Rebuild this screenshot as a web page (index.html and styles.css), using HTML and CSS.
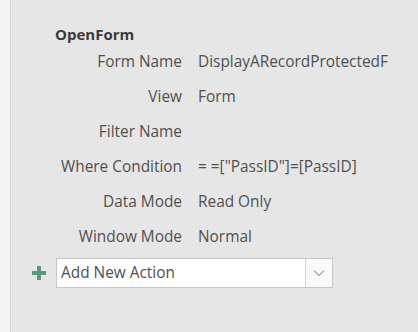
FILE: index.html
```html
<!DOCTYPE html>
<html lang="en">
<head>
    <meta charset="UTF-8">
    <title>Macro</title>
    <link rel="stylesheet" href="styles.css">
</head>
<body>
<div class="pane">
    <div class="gutter"></div>
    <div class="content">
        <div class="action-name">OpenForm</div>
        <div class="args">
            <div class="label">Form Name</div><div class="value">DisplayARecordProtectedF</div>
            <div class="label">View</div><div class="value">Form</div>
            <div class="label">Filter Name</div><div class="value"></div>
            <div class="label">Where Condition</div><div class="value">= =["PassID"]=[PassID]</div>
            <div class="label">Data Mode</div><div class="value">Read Only</div>
            <div class="label">Window Mode</div><div class="value">Normal</div>
        </div>
        <div class="add-row">
            <span class="plus">
                <svg width="14" height="14" viewBox="0 0 14 14"><path d="M5 0h4v5h5v4H9v5H5V9H0V5h5z" fill="#5b9a7c"/></svg>
            </span>
            <div class="combo">
                <span class="combo-text">Add New Action</span>
                <span class="combo-btn">
                    <svg width="12" height="8" viewBox="0 0 12 8"><path d="M1 1.5l5 5 5-5" fill="none" stroke="#666" stroke-width="1"/></svg>
                </span>
            </div>
        </div>
    </div>
</div>
</body>
</html>
```

FILE: styles.css
```css
* {
    margin: 0;
    padding: 0;
    box-sizing: border-box;
}

body {
    font-family: "Open Sans", "Noto Sans", sans-serif;
    background: #e6e6e6;
    width: 418px;
    height: 332px;
    overflow: hidden;
}

.pane {
    display: flex;
    height: 332px;
}

/* светлая полоса слева */
.gutter {
    width: 11px;
    background: #f4f4f4;
    border-right: 1px solid #d6d6d6;
}

.content {
    flex: 1;
    padding-top: 24px;
}

.action-name {
    font-weight: bold;
    font-size: 15px;
    color: #3a3a3a;
    margin-left: 44px;
    height: 20px;
    line-height: 20px;
}

.args {
    display: grid;
    grid-template-columns: 171px auto;
    column-gap: 16px;
    grid-auto-rows: 35px;
    font-size: 15.4px;
    color: #505050;
    line-height: 35px;
}

.label {
    text-align: right;
}

.value {
    white-space: nowrap;
}

.add-row {
    display: flex;
    align-items: center;
    margin-top: 4px;
    margin-left: 21px;
}

.plus {
    width: 14px;
    height: 14px;
    display: flex;
    margin-right: 10px;
}

.combo {
    display: flex;
    width: 277px;
    height: 30px;
    background: #fff;
    border: 1px solid #c6c6c6;
}

.combo-text {
    flex: 1;
    font-size: 15.4px;
    color: #505050;
    line-height: 28px;
    padding-left: 4px;
}

.combo-btn {
    width: 27px;
    border-left: 1px solid #d4d4d4;
    background: #fafafa;
    display: flex;
    align-items: center;
    justify-content: center;
}
```
